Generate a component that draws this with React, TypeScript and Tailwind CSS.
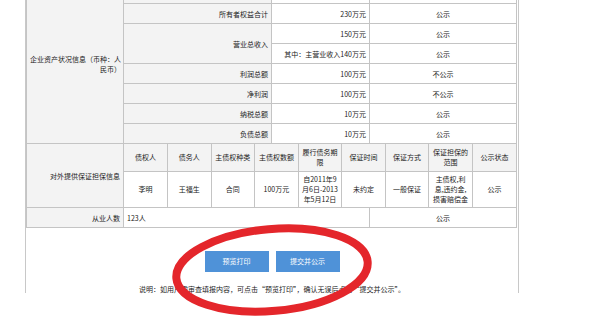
const cell = "border border-[#c4c4c4] px-[3px] leading-[10px]";
const subCell = "border border-[#c4c4c4] px-[2px] leading-[10px] text-center";
const label = `${cell} bg-[#f3f3f3] text-right`;
const value = `${cell} bg-white text-right`;
const status = `${cell} bg-white text-center`;

const assetRows = [
  { name: "所有者权益合计", amount: "230万元", pub: "公示" },
];
const afterRows = [
  { name: "利润总额", amount: "100万元", pub: "不公示" },
  { name: "净利润", amount: "100万元", pub: "不公示" },
  { name: "纳税总额", amount: "10万元", pub: "公示" },
  { name: "负债总额", amount: "10万元", pub: "公示" },
];

const guaranteeHead = [
  "债权人",
  "债务人",
  "主债权种类",
  "主债权数额",
  "履行债务期限",
  "保证时间",
  "保证方式",
  "保证担保的范围",
  "公示状态",
];
const guaranteeData = [
  "李明",
  "王福生",
  "合同",
  "100万元",
  "自2011年9月6日-2013年5月12日",
  "未约定",
  "一般保证",
  "主债权,利息,违约金,损害赔偿金",
  "公示",
];

const App = () => {
  return (
    <div
      className="relative h-[316px] w-[615px] overflow-hidden bg-white text-[#222]"
      style={{ fontFamily: '"Noto Sans CJK SC", "Noto Sans", sans-serif' }}
    >
      <div className="-mt-[17px] ml-[25px] h-[310px] w-[494px] border-x border-[#c8c8c8]">
        <table className="w-[490px] table-fixed border-collapse text-[7px]">
          <colgroup>
            <col className="w-[97px]" />
            <col className="w-[148px]" />
            <col className="w-[98px]" />
            <col className="w-[147px]" />
          </colgroup>
          <tbody>
            <tr className="h-[20px]">
              <td rowSpan={8} className={`${label} pr-[2px]`}>
                企业资产状况信息（币种：人民币）
              </td>
              <td className={label}></td>
              <td className={value}></td>
              <td className={status}></td>
            </tr>
            {assetRows.map((r) => (
              <tr key={r.name} className="h-[20px]">
                <td className={label}>{r.name}</td>
                <td className={value}>{r.amount}</td>
                <td className={status}>{r.pub}</td>
              </tr>
            ))}
            <tr className="h-[20px]">
              <td rowSpan={2} className={label}>
                营业总收入
              </td>
              <td className={value}>150万元</td>
              <td className={status}>公示</td>
            </tr>
            <tr className="h-[20px]">
              <td className={`${value} whitespace-nowrap`}>其中：主营业收入140万元</td>
              <td className={status}>公示</td>
            </tr>
            {afterRows.map((r) => (
              <tr key={r.name} className="h-[20px]">
                <td className={label}>{r.name}</td>
                <td className={value}>{r.amount}</td>
                <td className={status}>{r.pub}</td>
              </tr>
            ))}
            <tr>
              <td className={label}>对外提供保证担保信息</td>
              <td colSpan={3} className="border border-[#c4c4c4] p-0">
                <table className="w-full table-fixed border-collapse border-hidden">
                  <tbody>
                    <tr className="h-[27px]">
                      {guaranteeHead.map((h) => (
                        <td key={h} className={`${subCell} bg-[#f3f3f3]`}>
                          {h}
                        </td>
                      ))}
                    </tr>
                    <tr className="h-[36px]">
                      {guaranteeData.map((d, i) => (
                        <td key={i} className={`${subCell} bg-white`}>
                          {d}
                        </td>
                      ))}
                    </tr>
                  </tbody>
                </table>
              </td>
            </tr>
            <tr className="h-[20px]">
              <td className={label}>从业人数</td>
              <td colSpan={2} className={`${cell} bg-white text-left`}>
                123人
              </td>
              <td className={status}>公示</td>
            </tr>
          </tbody>
        </table>

        <div className="mt-[23px] flex justify-center gap-[7px]">
          <button className="h-[21px] w-[64px] bg-[#4f92d8] text-[7px] text-white">
            预览打印
          </button>
          <button className="h-[21px] w-[64px] bg-[#4f92d8] text-[7px] text-white">
            提交并公示
          </button>
        </div>
        <p className="mt-[12px] text-center text-[7px] leading-[10px]">
          说明：如用户需审查填报内容，可点击“预览打印”，确认无误后点击“提交并公示”。
        </p>
      </div>

      <svg
        className="pointer-events-none absolute left-0 top-0"
        width="615"
        height="316"
        viewBox="0 0 615 316"
      >
        <ellipse
          cx="272"
          cy="270"
          rx="96"
          ry="41"
          transform="rotate(-5 272 270)"
          fill="none"
          stroke="#e4262b"
          strokeWidth="8"
        />
      </svg>
    </div>
  );
};

export default App;
